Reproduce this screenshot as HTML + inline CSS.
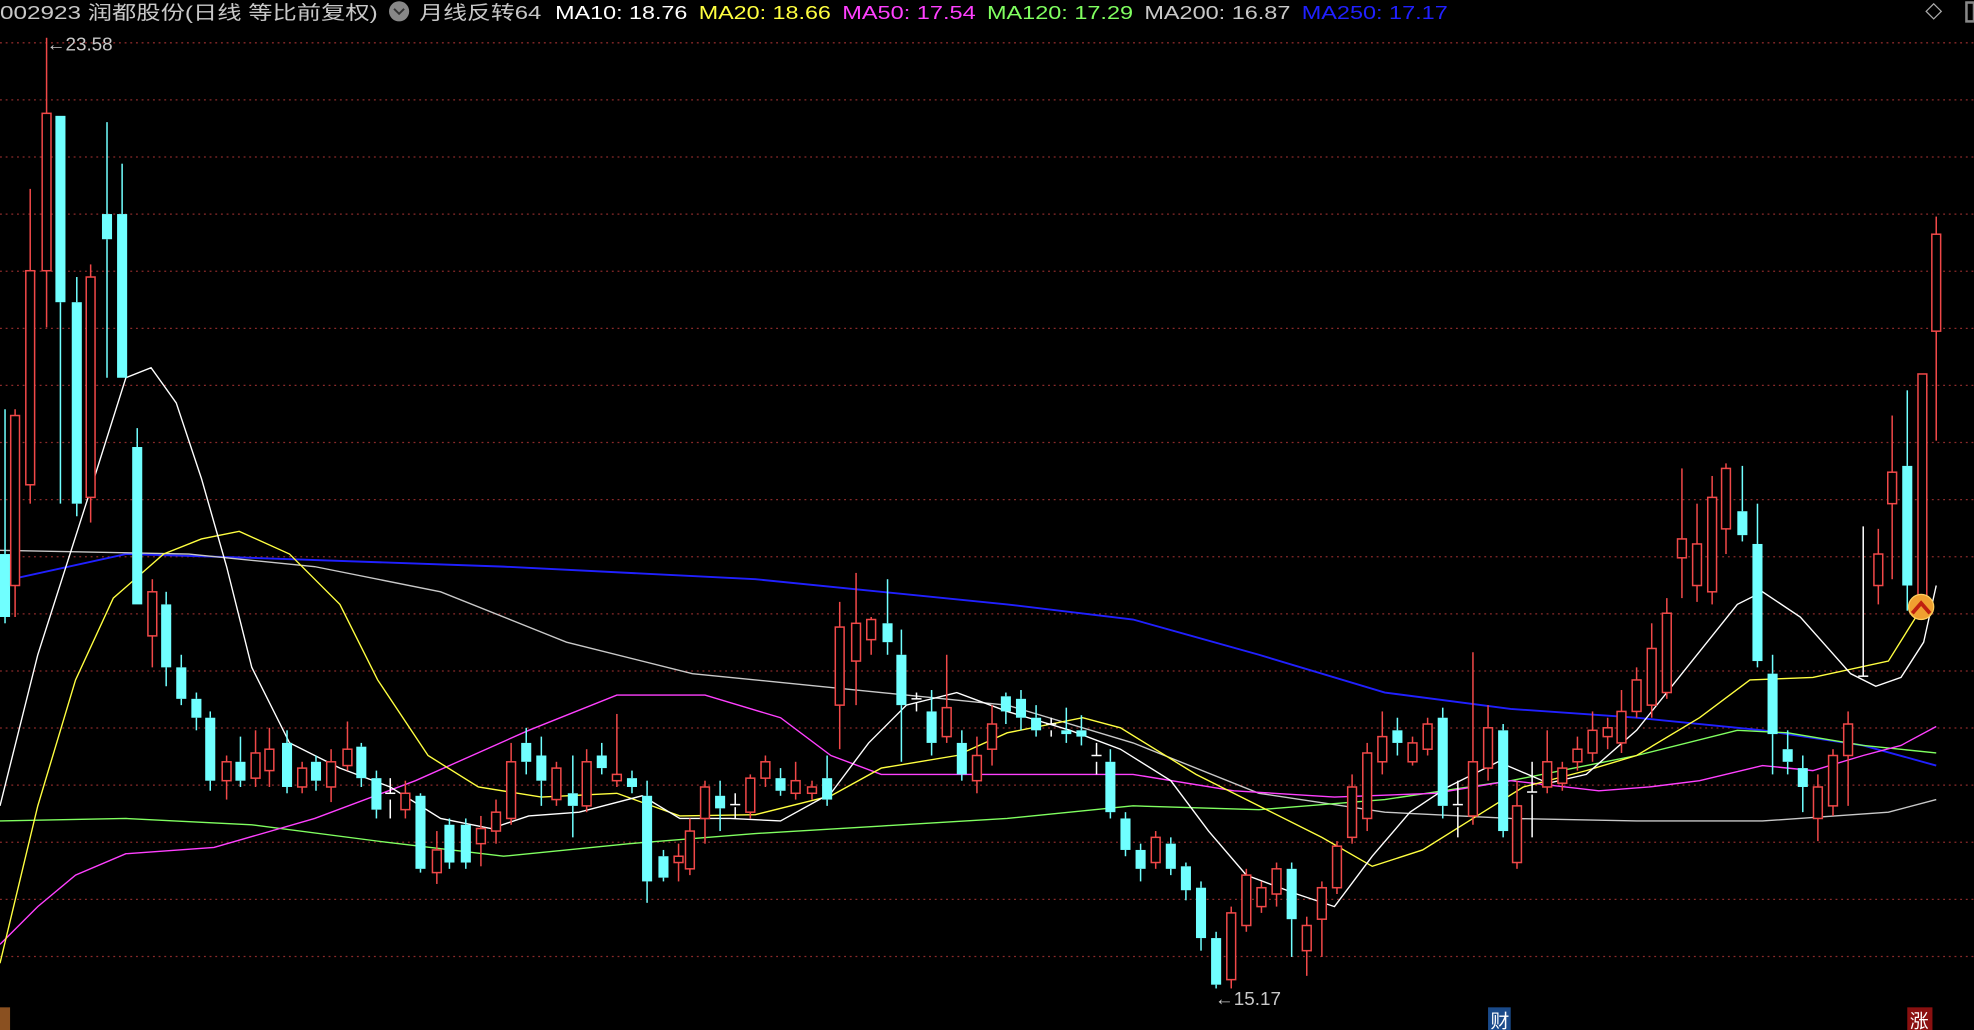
<!DOCTYPE html>
<html><head><meta charset="utf-8"><style>
html,body{margin:0;padding:0;background:#000;width:1974px;height:1030px;overflow:hidden}
svg{display:block}
text{font-family:"Liberation Sans","Noto Sans CJK SC",sans-serif}
</style></head><body>
<svg id="s" width="1974" height="1030" viewBox="0 0 1568 818" preserveAspectRatio="none" xmlns="http://www.w3.org/2000/svg">
<rect width="1568" height="818" fill="#000"/>
<g id="grid" stroke="#8a2a2a" stroke-width="1" stroke-dasharray="1.5,3"></g>
<g fill="none" stroke-width="1.1">
<polyline stroke="#2020ff" stroke-width="1.5" points="0,462 100,440 200,443 400,450 600,460 800,480 900,492 1000,520 1100,550 1200,563 1300,570 1400,580 1480,592 1538,608"/>
<polyline stroke="#c8c8c8" points="0,437 150,440 250,450 350,470 450,510 550,535 700,550 800,560 900,590 1000,630 1100,645 1200,650 1300,652 1400,652 1500,645 1538,635"/>
<polyline stroke="#80ff60" points="0,652 100,650 200,655 300,668 400,680 500,670 600,662 700,656 800,650 900,640 1000,643 1100,635 1200,620 1300,600 1380,580 1420,582 1480,592 1538,598"/>
<polyline stroke="#ff40ff" points="0,750 30,720 60,695 100,678 170,673 250,650 330,620 420,580 490,552 560,552 620,570 660,600 700,615 800,615 900,615 980,628 1060,633 1140,630 1200,620 1270,628 1310,625 1350,620 1400,608 1440,612 1480,600 1510,592 1538,577"/>
<polyline stroke="#ffff40" points="0,765 30,640 60,540 90,475 130,440 160,428 190,422 230,440 270,480 300,540 340,600 380,625 430,633 490,630 540,648 600,647 660,632 700,610 760,600 800,582 860,570 890,578 950,615 1000,640 1050,665 1090,688 1130,675 1170,650 1210,625 1260,612 1300,600 1350,570 1390,540 1440,538 1500,525 1525,485"/>
<polyline stroke="#ffffff" points="0,640 30,520 70,395 100,300 120,292 140,320 160,380 180,450 200,530 230,590 270,610 310,625 350,650 390,658 420,648 460,645 510,632 540,650 580,650 620,652 660,630 690,590 720,560 760,550 800,565 850,580 890,595 930,620 960,660 990,695 1030,710 1060,720 1090,680 1120,645 1150,625 1190,605 1230,622 1260,615 1300,580 1340,530 1380,480 1400,470 1430,490 1470,535 1490,545 1510,538 1528,510 1538,465"/>
</g>
<g id="c"></g>
<circle cx="1526" cy="482" r="10" fill="#f0a030" stroke="#ffd060"/>
<polyline points="1519,487 1526,479 1533,487" fill="none" stroke="#c02010" stroke-width="3"/>
<text x="0" y="15" font-size="15" fill="#c8c8c8" textLength="300" lengthAdjust="spacingAndGlyphs">002923 润都股份(日线 等比前复权)</text>
<circle cx="317" cy="9" r="8" fill="#888"/>
<polyline points="313,7 317,11 321,7" fill="none" stroke="#333" stroke-width="1.5"/>
<text x="333" y="15" font-size="15" fill="#c8c8c8" textLength="97" lengthAdjust="spacingAndGlyphs">月线反转64</text>
<text x="441" y="15" font-size="15" fill="#ffffff" textLength="105" lengthAdjust="spacingAndGlyphs">MA10: 18.76</text>
<text x="555" y="15" font-size="15" fill="#ffff40" textLength="105" lengthAdjust="spacingAndGlyphs">MA20: 18.66</text>
<text x="669" y="15" font-size="15" fill="#ff40ff" textLength="106" lengthAdjust="spacingAndGlyphs">MA50: 17.54</text>
<text x="784" y="15" font-size="15" fill="#80ff60" textLength="116" lengthAdjust="spacingAndGlyphs">MA120: 17.29</text>
<text x="909" y="15" font-size="15" fill="#c8c8c8" textLength="116" lengthAdjust="spacingAndGlyphs">MA200: 16.87</text>
<text x="1034" y="15" font-size="15" fill="#2020ff" textLength="116" lengthAdjust="spacingAndGlyphs">MA250: 17.17</text>
<path d="M1536 3 L1542 9 L1536 15 L1530 9 Z" fill="none" stroke="#aaa"/>
<rect x="1562" y="2" width="6" height="15" fill="none" stroke="#888" stroke-width="2"/>
<text x="37" y="40" font-size="15" fill="#c8c8c8">←23.58</text>
<text x="965" y="798" font-size="15" fill="#c8c8c8">←15.17</text>
<rect x="0" y="800" width="8" height="18" fill="#8a5020"/>
<rect x="1182" y="800" width="18" height="18" fill="#1a4a8a"/>
<text x="1184" y="816" font-size="15" fill="#fff">财</text>
<rect x="1515" y="800" width="20" height="18" fill="#8a1010"/>
<text x="1517" y="816" font-size="15" fill="#fff">涨</text>
</svg>
<script>
var NS="http://www.w3.org/2000/svg";
var g=document.getElementById('grid');
for(var i=0;i<17;i++){var y=34+i*45.35;var l=document.createElementNS(NS,'line');l.setAttribute('x1',0);l.setAttribute('x2',1568);l.setAttribute('y1',y);l.setAttribute('y2',y);g.appendChild(l);}
var d=[
[4,440,490,325,495,'c'],[12,330,465,325,490,'r'],[24,215,385,150,400,'r'],[37,90,215,30,260,'r'],[48,92,240,92,400,'c'],[61,240,400,220,410,'c'],[72,220,395,210,415,'r'],[85,170,190,97,300,'c'],[97,170,300,130,300,'c'],[109,355,480,340,480,'c'],[121,470,505,460,530,'r'],[132,480,530,470,545,'c'],[144,530,555,520,560,'c'],[156,555,570,550,580,'c'],[167,570,620,565,628,'c'],[180,605,620,600,635,'r'],[191,605,620,585,625,'c'],[203,598,618,580,625,'r'],[214,595,612,578,625,'r'],[228,590,625,580,630,'c'],[240,610,625,605,630,'r'],[251,605,620,600,628,'c'],[263,605,625,595,637,'r'],[276,595,608,573,612,'r'],[287,593,618,590,625,'c'],[299,618,643,612,650,'c'],[310,630,635,618,650,'w'],[322,630,643,620,650,'r'],[334,632,690,630,693,'c'],[347,675,693,660,702,'r'],[357,655,685,650,690,'c'],[370,655,685,650,690,'c'],[382,658,670,648,688,'r'],[394,645,660,635,670,'r'],[406,605,650,590,655,'r'],[418,590,605,578,615,'c'],[430,600,620,585,640,'c'],[442,610,635,605,640,'r'],[455,630,640,600,665,'c'],[466,605,640,595,645,'r'],[478,600,610,590,615,'c'],[490,615,620,567,625,'r'],[502,618,625,612,630,'c'],[514,632,700,620,717,'c'],[527,680,697,675,700,'c'],[539,680,685,670,700,'r'],[548,660,690,650,695,'r'],[560,625,650,620,670,'r'],[572,632,642,620,660,'c'],[584,639,641,630,650,'w'],[596,618,645,615,650,'r'],[608,605,618,600,625,'r'],[620,618,628,610,632,'c'],[632,620,630,605,635,'r'],[645,625,630,620,635,'r'],[657,618,635,600,640,'c'],[667,498,560,478,595,'r'],[680,495,525,455,560,'r'],[692,492,508,490,520,'r'],[705,495,510,460,520,'c'],[716,520,560,500,605,'c'],[728,555,558,550,565,'w'],[740,565,590,548,600,'c'],[752,562,585,520,590,'r'],[764,590,615,580,620,'c'],[776,600,620,585,630,'r'],[788,575,595,560,608,'r'],[799,553,565,550,575,'c'],[811,555,570,548,580,'c'],[823,570,580,560,585,'c'],[835,575,580,570,585,'w'],[847,580,583,562,590,'c'],[859,580,585,568,592,'c'],[871,600,605,590,615,'w'],[882,605,645,595,650,'c'],[894,650,675,645,680,'c'],[906,675,690,670,700,'c'],[918,665,685,660,690,'r'],[930,670,690,665,695,'c'],[942,688,707,685,715,'c'],[954,705,745,700,755,'c'],[966,745,782,740,785,'c'],[978,725,778,720,785,'r'],[990,695,735,690,740,'r'],[1002,705,720,700,725,'r'],[1014,690,710,685,720,'r'],[1026,690,730,685,760,'c'],[1038,735,755,728,775,'r'],[1050,705,730,700,760,'r'],[1062,672,705,668,710,'r'],[1074,625,665,615,670,'r'],[1086,598,650,590,660,'r'],[1098,585,605,565,615,'r'],[1110,580,590,570,600,'c'],[1122,590,605,585,608,'r'],[1134,575,595,570,600,'r'],[1146,570,640,562,650,'c'],[1158,639,641,620,665,'w'],[1170,605,648,518,655,'r'],[1182,578,610,560,620,'r'],[1194,580,660,575,665,'c'],[1205,640,685,620,690,'r'],[1217,629,631,605,665,'w'],[1229,605,625,580,630,'r'],[1241,610,622,605,628,'r'],[1253,595,605,585,612,'r'],[1265,580,598,565,605,'r'],[1277,578,585,570,595,'r'],[1288,565,590,548,598,'r'],[1300,540,565,530,570,'r'],[1312,515,560,495,570,'r'],[1324,487,550,475,555,'r'],[1336,428,443,372,475,'r'],[1348,432,465,400,478,'r'],[1360,395,470,378,480,'r'],[1371,372,420,368,440,'r'],[1384,406,425,370,430,'c'],[1396,432,525,400,530,'c'],[1408,535,583,520,615,'c'],[1420,595,605,580,615,'c'],[1432,610,625,600,645,'c'],[1444,625,650,615,668,'r'],[1456,600,640,595,648,'r'],[1468,575,600,565,640,'r'],[1480,537,539,418,539,'w'],[1492,440,465,420,480,'r'],[1503,375,400,330,460,'r'],[1515,370,465,310,485,'c'],[1527,297,480,297,490,'r'],[1538,186,263,172,350,'r']];
var c=document.getElementById('c');
function el(t,a){var e=document.createElementNS(NS,t);for(var k in a)e.setAttribute(k,a[k]);c.appendChild(e);}
d.forEach(function(k){var x=k[0],col=k[5]=='r'?'#f04848':(k[5]=='c'?'#70ffff':'#ffffff');
el('line',{x1:x,x2:x,y1:k[3],y2:k[1],stroke:col,'stroke-width':1.2});
el('line',{x1:x,x2:x,y1:k[2],y2:k[4],stroke:col,'stroke-width':1.2});
if(k[5]=='r')el('rect',{x:x-3.5,y:k[1],width:7,height:Math.max(1,k[2]-k[1]),fill:'#000',stroke:col,'stroke-width':1.2});
else if(k[5]=='c')el('rect',{x:x-4,y:k[1],width:8,height:Math.max(1,k[2]-k[1]),fill:col});
else el('line',{x1:x-4,x2:x+4,y1:k[1],y2:k[1],stroke:col,'stroke-width':1.2});});
</script>
</body></html>
